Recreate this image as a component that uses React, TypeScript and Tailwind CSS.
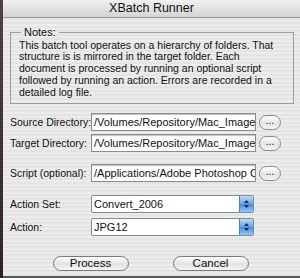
const font = '[font-family:"Liberation_Sans",Arial,sans-serif]';

function Field({ label, value }: { label: string; value: string }) {
  return (
    <div className="flex items-center h-[18px]">
      <span className="w-[81px] shrink-0 text-[10.5px] text-[#111] whitespace-nowrap overflow-hidden">{label}</span>
      <div className="w-[165px] shrink-0 h-[18px] bg-white border border-[#8a8a8a] shadow-[inset_0_1px_1px_rgba(0,0,0,0.25)] overflow-hidden whitespace-nowrap text-[11px] leading-[16px] pl-[2px] text-[#111]">
        {value}
      </div>
      <button className="ml-[3px] shrink-0 w-[22px] h-[15px] rounded-full border border-[#8a8a8a] bg-[linear-gradient(#ffffff,#e4e4e4_55%,#f4f4f4)] text-[10px] leading-[10px] text-[#222] flex items-center justify-center pb-[3px]">
        ...
      </button>
    </div>
  );
}

function Popup({ label, value }: { label: string; value: string }) {
  return (
    <div className="flex items-center h-[18px]">
      <span className="w-[81px] shrink-0 text-[10.5px] text-[#111]">{label}</span>
      <div className="w-[163px] shrink-0 h-[18px] flex border border-[#8a8a8a] rounded-[2px] overflow-hidden bg-white">
        <div className="flex-1 text-[11px] leading-[16px] pl-[2px] text-[#111]">{value}</div>
        <div className="w-[14px] bg-[linear-gradient(#b9dcff,#5fa9f2_50%,#3d8ae6_51%,#8ecbff)] border-l border-[#4a7fc0] flex flex-col items-center justify-center gap-[2px]">
          <svg width="5" height="3" viewBox="0 0 5 3"><polygon points="2.5,0 5,3 0,3" fill="#1a2a40" /></svg>
          <svg width="5" height="3" viewBox="0 0 5 3"><polygon points="0,0 5,0 2.5,3" fill="#1a2a40" /></svg>
        </div>
      </div>
    </div>
  );
}

function PillButton({ children }: { children: string }) {
  return (
    <button className="w-[76px] h-[15px] rounded-full border border-[#7a7a7a] bg-[linear-gradient(#ffffff,#e2e2e2_55%,#f6f6f6)] text-[11.5px] leading-[13px] text-[#111] flex items-center justify-center">
      {children}
    </button>
  );
}

export default function App() {
  return (
    <div className={`w-[300px] h-[278px] flex bg-[#3b2f30] ${font}`}>
      <div className="w-[3px] shrink-0 bg-[linear-gradient(#5a3d44,#2d2426)]" />
      <div className="flex-1 min-w-0 flex flex-col bg-[repeating-linear-gradient(#ececec_0px,#ececec_2px,#e4e4e4_2px,#e4e4e4_4px)] border-b-2 border-[#5a5a5a]">
        {/* Title bar */}
        <div className="h-[18px] shrink-0 flex items-center justify-center bg-[linear-gradient(#f0f0f0,#d4d4d4)] border-b border-[#9a9a9a] text-[12.5px] text-[#111]">
          XBatch Runner
        </div>

        {/* Notes */}
        <div className="pl-[7px] pr-[6px] mt-[6px]">
          <fieldset className="min-w-0 border border-[#9c9c9c] pb-[5px]">
            <legend className="ml-[10px] px-[3px] text-[11px] text-[#111]">Notes:</legend>
            <div className="pl-[8px] pr-[6px]">
              <p className="text-[10.5px] leading-[11.8px] text-[#111] -mt-[1px]">
                This batch tool operates on a hierarchy of folders. That structure is is mirrored in the target folder. Each document is processed by running an optional script followed by running an action. Errors are recorded in a detailed log file.
              </p>
            </div>
          </fieldset>
        </div>

        <div className="flex flex-col pl-[7px] mt-[9px]">
          <Field label="Source Directory:" value="/Volumes/Repository/Mac_Image_" />
          <div className="h-[3px]" />
          <Field label="Target Directory:" value="/Volumes/Repository/Mac_Image_" />
          <div className="h-[12px]" />
          <Field label="Script (optional):" value="/Applications/Adobe Photoshop CS2" />
          <div className="h-[13px]" />
          <Popup label="Action Set:" value="Convert_2006" />
          <div className="h-[5px]" />
          <Popup label="Action:" value="JPG12" />
        </div>

        <div className="flex justify-center gap-[44px] mt-[20px] pr-[2px]">
          <PillButton>Process</PillButton>
          <PillButton>Cancel</PillButton>
        </div>
      </div>
    </div>
  );
}
